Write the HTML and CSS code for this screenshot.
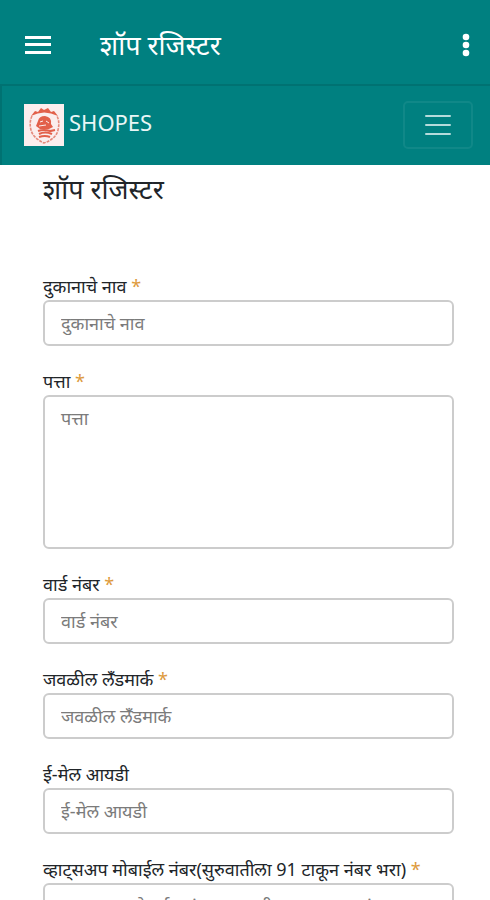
FILE: index.html
```html
<!DOCTYPE html>
<html lang="mr">
  <head>
    <meta charset="UTF-8">
    <meta name="viewport" content="width=device-width, initial-scale=1">
    <title>शॉप रजिस्टर</title>
    <link rel="stylesheet" href="styles.css">
  </head>
  <body>
    <header class="appbar">
      <button type="button" class="icon-btn" aria-label="Menu">
        <svg width="26" height="20" viewBox="0 0 26 20" fill="#fff">
          <rect y="1" width="26" height="3"/>
          <rect y="8" width="26" height="3"/>
          <rect y="16" width="26" height="3"/>
        </svg>
      </button>
      <span class="appbar-title">शॉप रजिस्टर</span>
      <button type="button" class="icon-btn" aria-label="More">
        <svg width="8" height="24" viewBox="0 0 8 24" fill="#fff">
          <circle cx="4" cy="4" r="3.3"/>
          <circle cx="4" cy="12" r="3.3"/>
          <circle cx="4" cy="20" r="3.3"/>
        </svg>
      </button>
    </header>

    <nav class="navbar">
      <a class="brand" href="#">
        <svg class="logo" viewBox="0 0 40 42">
          <rect width="40" height="42" fill="#fbeeee"/>
          <path d="M7 12 L11 7 L14 8 L17 4 L20 6 L24 4 L27 8 L30 7 L34 12 Q20 5 7 12Z" fill="#e2604a"/>
          <path d="M8 12 Q5 18 7 26 Q9 34 20 39 Q32 35 34 26 Q36 18 33 12" fill="none" stroke="#e58a7c" stroke-width="1.6" stroke-dasharray="3 1"/>
          <path d="M14 17 Q15 12 21 12 Q28 13 27 20 L29 23 L25 25 L16 25 L12 22 Z" fill="#e2604a"/>
          <path d="M16 18 L19 17 M22 17 L25 19 M15 22 L22 21" stroke="#fbeeee" stroke-width="1" fill="none"/>
          <path d="M14 27 Q20 25 26 27 L31 26 M15 30 Q21 27 28 30 M15 33 Q21 31 26 33" fill="none" stroke="#e2604a" stroke-width="2.2"/>
        </svg>
        <span class="brand-name">SHOPES</span>
      </a>
      <button type="button" class="toggler" aria-label="Toggle navigation">
        <svg width="28" height="22" viewBox="0 0 28 22" stroke="#b5dcdc" stroke-width="2" stroke-linecap="round">
          <path d="M2 2H26M2 11H26M2 20H26"/>
        </svg>
      </button>
    </nav>

    <main class="content">
      <h1 class="title">शॉप रजिस्टर</h1>
      <form>
        <div class="field">
          <label for="shop">दुकानाचे नाव <span class="req">*</span></label>
          <input type="text" id="shop" placeholder="दुकानाचे नाव">
        </div>
        <div class="field">
          <label for="address">पत्ता <span class="req">*</span></label>
          <textarea id="address" placeholder="पत्ता"></textarea>
        </div>
        <div class="field">
          <label for="ward">वार्ड नंबर <span class="req">*</span></label>
          <input type="text" id="ward" placeholder="वार्ड नंबर">
        </div>
        <div class="field">
          <label for="landmark">जवळील लँडमार्क <span class="req">*</span></label>
          <input type="text" id="landmark" placeholder="जवळील लँडमार्क">
        </div>
        <div class="field">
          <label for="email">ई-मेल आयडी</label>
          <input type="email" id="email" placeholder="ई-मेल आयडी">
        </div>
        <div class="field">
          <label for="whatsapp">व्हाट्सअप मोबाईल नंबर(सुरुवातीला 91 टाकून नंबर भरा) <span class="req">*</span></label>
          <input type="tel" id="whatsapp" placeholder="व्हाट्सअप मोबाईल नंबर(सुरुवातीला 91 टाकून नंबर भरा)">
        </div>
      </form>
    </main>
  </body>
</html>
```
FILE: styles.css
```css
* {
  box-sizing: border-box;
}
body {
  margin: 0;
  height: 100vh;
  overflow: hidden;
  background-color: #fff;
  color: #212529;
  font-family: "Noto Sans", "Noto Sans Devanagari", sans-serif;
  font-size: 18px;
  line-height: 24px;
}
.appbar {
  display: flex;
  align-items: center;
  height: 84px;
  padding: 6px 20px 0 25px;
  background-color: teal;
}
.icon-btn {
  display: flex;
  padding: 0;
  border: 0;
  background: none;
}
.appbar-title {
  flex: 1;
  margin-left: 49px;
  color: #fff;
  font-size: 27px;
  line-height: 36px;
}
.navbar {
  display: flex;
  align-items: center;
  justify-content: space-between;
  height: 81px;
  padding: 0 17px 2px 22px;
  background-color: teal;
  border-top: 2px solid #007272;
  border-left: 2px solid #007272;
}
.brand {
  display: flex;
  align-items: center;
  gap: 5px;
  color: #e9f6f6;
  font-size: 22px;
  line-height: 32px;
  text-decoration: none;
}
.brand-name {
  padding-bottom: 6px;
}
.logo {
  width: 40px;
  height: 42px;
}
.toggler {
  display: flex;
  align-items: center;
  justify-content: center;
  width: 70px;
  height: 48px;
  padding: 0;
  background: none;
  border: 2px solid #108888;
  border-radius: 5px;
}
.content {
  padding: 6px 36px 0 43px;
}
.title {
  margin: 0 0 69px;
  font-size: 27px;
  font-weight: 400;
  line-height: 36px;
}
.field {
  margin-bottom: 25px;
}
label {
  display: block;
  margin-bottom: 4px;
  line-height: 20px;
}
.req {
  color: #dd9a3c;
}
input,
textarea {
  display: block;
  width: 100%;
  height: 46px;
  padding: 9px 16px;
  border: 2px solid #ccc;
  border-radius: 6px;
  background-color: #fff;
  color: #212529;
  font: inherit;
}
textarea {
  height: 154px;
  resize: none;
}
::placeholder {
  color: #7b7b7b;
  opacity: 1;
}
```
